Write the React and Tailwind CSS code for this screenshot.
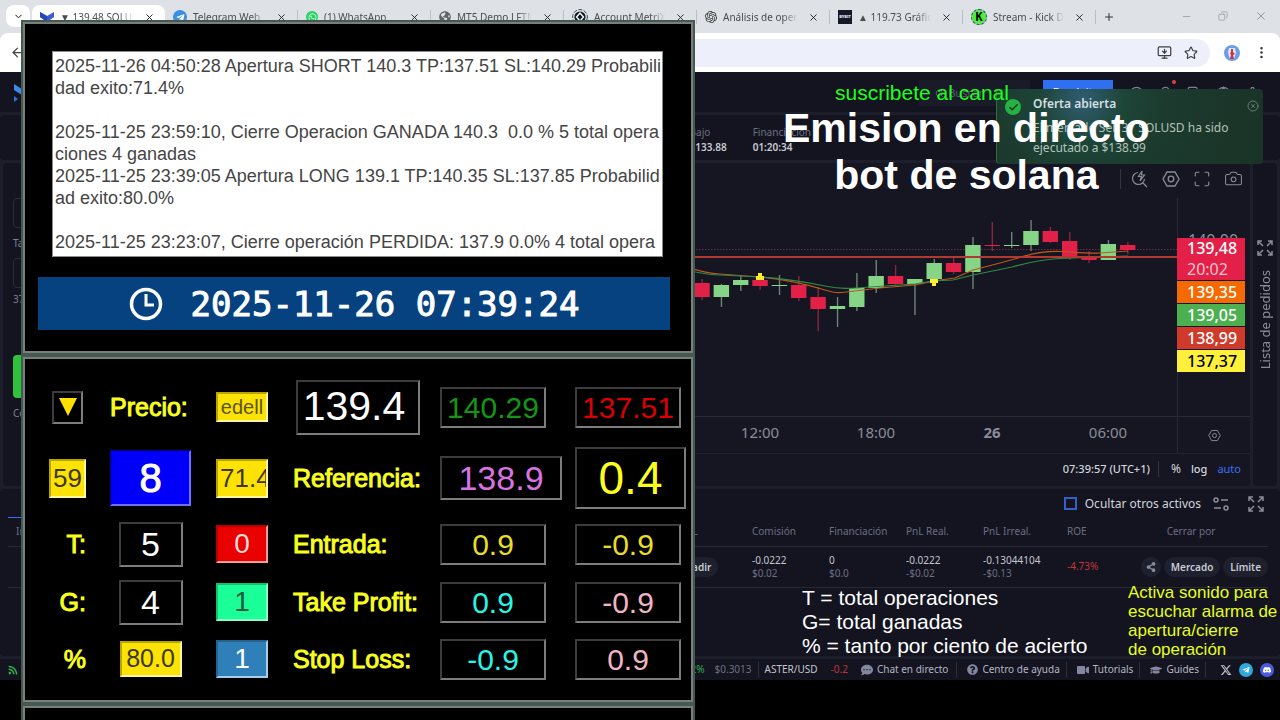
import {
  ArrowLeft,
  Bell,
  Camera,
  Check,
  ChevronDown,
  CircleHelp,
  CircleX,
  Copy,
  EllipsisVertical,
  Globe,
  Maximize,
  Minus,
  MonitorDown,
  Plus,
  Search,
  Settings,
  Star,
  X,
} from "lucide-react";
import {
  FaCommentDots,
  FaGlobeAmericas,
  FaGraduationCap,
  FaQuestionCircle,
  FaRss,
  FaShareAlt,
  FaTelegramPlane,
  FaVideo,
  FaWhatsapp,
} from "react-icons/fa";
import { FaXTwitter } from "react-icons/fa6";
import { SiDiscord, SiOpenai } from "react-icons/si";

// ---------------------------- data ----------------------------|

const tabs = [
  { title: "▼ 139.48 SOLUSD", icon: "phemex", active: true },
  { title: "Telegram Web", icon: "telegram" },
  { title: "(1) WhatsApp", icon: "whatsapp" },
  { title: "MT5 Demo LFTM", icon: "globe" },
  { title: "Account MetriX |", icon: "metrix" },
  { title: "Análisis de operaciones", icon: "openai" },
  { title: "▲ 119.73 Gráficos", icon: "bybit" },
  { title: "Stream - Kick Dash", icon: "kick" },
];

// [up, open/close top, bottom, wick top, wick bottom]
const candles = [
  [false, 283, 297, 279, 300],
  [true, 285, 297, 284, 307],
  [true, 280, 285, 276, 291],
  [false, 280, 286, 276, 290],
  [true, 285, 286, 275, 295],
  [false, 285, 298, 276, 301],
  [false, 297, 309, 287, 331],
  [true, 306, 309, 297, 327],
  [true, 288, 307, 273, 311],
  [true, 276, 288, 260, 293],
  [false, 276, 284, 265, 285],
  [true, 279, 284, 279, 315],
  [true, 263, 279, 259, 280],
  [false, 263, 272, 257, 274],
  [true, 245, 272, 237, 289],
  [false, 245, 246, 222, 251],
  [true, 245, 246, 232, 248],
  [true, 231, 245, 220, 251],
  [false, 231, 242, 227, 243],
  [false, 241, 257, 232, 260],
  [false, 256, 260, 251, 263],
  [true, 244, 260, 240, 260],
  [false, 245, 250, 242, 254],
];

const priceTags = [
  { value: "139,35", style: "bg-[#f56a00] text-white" },
  { value: "139,05", style: "bg-[#4caf50] text-white" },
  { value: "138,99", style: "bg-[#cf3a2b] text-white" },
  { value: "137,37", style: "bg-[#fff03c] text-black" },
];

const log = `2025-11-26 04:50:28 Apertura SHORT 140.3 TP:137.51 SL:140.29 Probabili
dad exito:71.4%

2025-11-25 23:59:10, Cierre Operacion GANADA 140.3  0.0 % 5 total opera
ciones 4 ganadas
2025-11-25 23:39:05 Apertura LONG 139.1 TP:140.35 SL:137.85 Probabilid
ad exito:80.0%

2025-11-25 23:23:07, Cierre operación PERDIDA: 137.9 0.0% 4 total opera`;

// ---------------------------- browser ----------------------------|

function PhemexMark({ className }) {
  return (
    <svg viewBox="0 0 14 10" className={className}>
      <path d="M0 0 7 4 14 0v5L7 10 0 5z" fill="#3b5bdb" />
      <path d="M0 0 7 4v6L0 5z" fill="#2746b8" />
    </svg>
  );
}

function Favicon({ icon }) {
  if (icon === "phemex") return <PhemexMark className="w-3.5 shrink-0" />;
  if (icon === "telegram")
    return (
      <span className="flex size-3.5 shrink-0 items-center justify-center rounded-full bg-[#3a8fe0] text-white">
        <FaTelegramPlane size={9} />
      </span>
    );
  if (icon === "whatsapp")
    return (
      <span className="flex size-3 shrink-0 items-center justify-center rounded-full bg-[#25d366] text-white">
        <FaWhatsapp size={9} />
      </span>
    );
  if (icon === "globe") return <FaGlobeAmericas size={12} className="shrink-0 text-[#5f6368]" />;
  if (icon === "openai") return <SiOpenai size={12} className="shrink-0 text-[#333]" />;
  if (icon === "bybit")
    return (
      <span className="flex h-3.5 w-3.5 shrink-0 items-center justify-center bg-[#15192a] text-[4px] font-bold text-white">
        BYBIT
      </span>
    );
  if (icon === "kick")
    return (
      <span className="flex size-4 shrink-0 items-center justify-center rounded-full border border-dashed border-[#1a4a6a] bg-[#3dfc1c] font-['DejaVu_Sans_Mono'] text-[12px] font-bold leading-none text-black ring-1 ring-[#9fb4bd] ring-inset">
        K
      </span>
    );
  return (
    <svg viewBox="0 0 16 16" className="size-4 shrink-0">
      <circle cx="8" cy="8" r="7.4" fill="none" stroke="#3b4a5c" strokeDasharray="4 1.5" />
      <circle cx="8" cy="8" r="5.6" fill="#111827" />
      <path d="M8 4 4.500 8 8 12 11.500 8z" fill="none" stroke="#fff" strokeWidth="1.4" />
    </svg>
  );
}

function Tab({ tab }) {
  return (
    <div
      className={`flex h-7 w-[133px] shrink-0 items-center pb-1 ${tab.active ? "rounded-t-lg bg-white" : ""}`}
    >
      <div className="flex min-w-0 flex-1 items-center gap-1.5 pl-2">
        <Favicon icon={tab.icon} />
        <span className="min-w-0 flex-1 overflow-hidden whitespace-nowrap text-[10px] text-[#4a4d52] [mask-image:linear-gradient(to_right,black_80%,transparent)]">
          {tab.title}
        </span>
      </div>
      <button aria-label="Cerrar pestaña" className="px-2.5">
        <X size={11} className="text-[#1f2023]" />
      </button>
      {!tab.active && <span className="h-3.5 w-px bg-[#b9bdc4]" />}
    </div>
  );
}

function BrowserBar() {
  return (
    <header className="bg-[#dee1e5]">
      <div className="flex items-end">
        <button
          aria-label="Buscar pestañas"
          className="mb-1.5 ml-1.5 mr-0.5 flex h-[22px] w-6 items-center justify-center rounded-lg bg-white"
        >
          <ChevronDown size={11} />
        </button>
        <div className="flex h-[33px] flex-1 items-end overflow-hidden">
          {tabs.map((tab) => (
            <Tab key={tab.title} tab={tab} />
          ))}
          <button aria-label="Nueva pestaña" className="mb-2.5 ml-[7px]">
            <Plus size={12} className="text-[#333]" />
          </button>
        </div>
        <div className="mb-2.5 flex items-center gap-[26px] pr-3 text-[#8b8e93]">
          <Minus size={11} strokeWidth={1.5} />
          <Copy size={10} strokeWidth={1.5} className="-scale-x-100" />
          <X size={14} strokeWidth={1.5} />
        </div>
      </div>
      <div className="flex h-[39px] items-center rounded-t-lg bg-white pl-2.5 pr-[11px]">
        <ArrowLeft size={15} className="text-[#444]" />
        <div className="ml-4 flex h-7 flex-1 items-center justify-end gap-3 rounded-full bg-[#edf0fa] pr-3 text-[#3c4043]">
          <MonitorDown size={15} />
          <Star size={14} />
        </div>
        <span className="ml-3.5 flex size-4 items-center justify-center rounded-full bg-[#6d9de8]">
          <svg viewBox="0 0 16 16" className="size-4">
            <path d="M5 3h6l1 5-2 6H6L4 8z" fill="#dfe6f5" />
            <path d="M7 4h2v3l2 2-2 1 1 4H6l1-4-1-2 1-1z" fill="#c8344a" />
          </svg>
        </span>
        <EllipsisVertical size={15} className="ml-3.5 text-[#333]" />
      </div>
    </header>
  );
}

// ---------------------------- exchange page ----------------------------|

function AppHeader() {
  return (
    <div className="flex h-10 items-start bg-[#131420] pt-2">
      <svg viewBox="0 0 14 20" className="ml-3.5 mt-1 h-5 w-3.5">
        <path d="M0 0 14 9v6L0 6z" fill="#3b8be8" />
        <path d="M0 12l4 3-4 3z" fill="#2f6fe0" />
      </svg>
      <label className="ml-auto mr-[13px] flex h-[26px] w-[111px] items-center gap-1 bg-[#1a1b28] px-4 text-[#6b6e80]">
        <Search size={11} />
        <input
          aria-label="Buscar"
          placeholder="Buscar"
          className="w-full bg-transparent text-[11px] outline-none placeholder:text-[#5a5d6e]"
        />
      </label>
      <button className="h-6 w-[70px] bg-[#2f6ff2] text-[11px] text-white">Depósitar</button>
      <div className="mr-5 ml-4 mt-1.5 flex gap-[14px] text-[#7d8090]">
        <CircleHelp size={15} />
        <span className="relative">
          <Bell size={15} />
          <span className="absolute -top-1.5 left-3.5 size-1 rounded-full bg-[#e0413f]" />
        </span>
        <Copy size={15} />
        <Globe size={15} />
        <Settings size={15} />
      </div>
    </div>
  );
}

function MarketStats() {
  return (
    <dl className="flex h-[45px] items-center justify-end gap-[26px] rounded bg-[#131420] pt-1 pr-[469px] text-[10px] leading-[15px]">
      <div>
        <dt className="text-[#6c6f80]">Bajo</dt>
        <dd className="font-semibold text-[#c9cbd4]">$133.88</dd>
      </div>
      <div>
        <dt className="text-[#6c6f80]">Financiación</dt>
        <dd className="font-semibold text-[#c9cbd4]">01:20:34</dd>
      </div>
    </dl>
  );
}

function OrderForm() {
  return (
    <aside className="flex w-[200px] flex-col rounded bg-[#131420] pl-2.5 pt-[35px] text-[10px] text-[#7d8090]">
      <div className="h-[30px] w-40 rounded border border-[#2b2d3b]" />
      <span className="py-2 leading-[14px]">Tamaño</span>
      <div className="h-[30px] w-40 rounded border border-[#2b2d3b]" />
      <span className="py-1 leading-[14px]">37</span>
      <button aria-label="Comprar" className="mt-[45px] h-[43px] w-40 rounded-sm bg-[#2ec23e]" />
      <span className="py-2 leading-[14px]">Coste</span>
    </aside>
  );
}

function HexIcon({ size }) {
  return (
    <svg width={size} height={size} viewBox="0 0 18 18" fill="none" stroke="currentColor" strokeWidth="1.3">
      <path d="M5 2h8l4 7-4 7H5L1 9z" />
      <circle cx="9" cy="9" r="2.8" />
    </svg>
  );
}

function Candles() {
  return (
    <svg viewBox="690 198 487 218" className="ml-auto h-[218px] w-[487px]">
      <path d="M690 249.5H1177" stroke="#6b2f43" strokeDasharray="1.5 1.5" />
      {candles.map(([up, top, bottom, high, low], i) => {
        const x = 702 + i * 19.35;
        return (
          <g key={i}>
            <rect x={x - 0.6} y={high} width="1.4" height={low - high} fill={up ? "#6d8478" : "#86263f"} />
            <rect x={x - 7.7} y={top} width="15.4" height={bottom - top} fill={up ? "#86d486" : "#e32148"} />
          </g>
        );
      })}
      <path
        d="M690 268C700 271 708 273 720 274L760 277C790 280 815 287 825 290S838 293 846 292L880 288 915 285 940 280 955 278 973 270 1000 263 1018 258C1030 254 1045 251 1060 251.5S1085 254 1100 253L1128 251"
        fill="none"
        stroke="#c2561c"
        strokeWidth="1.2"
      />
      <path
        d="M690 271C700 273 710 275 720 275L760 277C790 279 810 283 825 286S850 289 870 287L915 284 932 281 953 280 973 275 1012 267C1030 262 1045 259 1060 258.5L1128 256"
        fill="none"
        stroke="#2f8a45"
        strokeWidth="1.2"
      />
      <path d="M690 257H1177" stroke="#b03a32" strokeWidth="2" />
      <path d="M758 273h4v3h2v4h-8v-4h2z" fill="#ffee2e" />
      <path d="M930 279h8v4h-2v3h-4v-3h-2z" fill="#ffee2e" />
    </svg>
  );
}

function Chart() {
  return (
    <section className="flex min-w-0 flex-1 flex-col rounded bg-[#151621] text-[#8a8c99]">
      <div className="flex h-[35px] items-center justify-end gap-[13px] pr-[7px] pb-1">
        <span className="mr-[-3px] h-5 w-px bg-[#333545]" />
        <svg width="18" height="18" viewBox="0 0 18 18" fill="none" stroke="currentColor" strokeWidth="1.2">
          <path d="M7 2.5A6 6 0 1 0 13.5 9M12 13l4 4M11 1 7.5 6.5h3L9 11l4.5-6h-3z" />
        </svg>
        <HexIcon size={18} />
        <Maximize size={18} strokeWidth={1.5} />
        <Camera size={19} strokeWidth={1.3} />
      </div>
      <div className="flex flex-1">
        <div className="min-w-0 flex-1">
          <Candles />
        </div>
        <div className="w-[73px] border-l border-[#272936] pt-9 text-[16px]">
          <p className="h-1 overflow-hidden pl-2.5 leading-3">140,00</p>
          <div className="mr-[5px] -ml-px bg-[#e32148] pl-2.5 leading-[21px] text-white">
            <p className="font-medium">139,48</p>
            <p className="text-[#f8c3cd]">20:02</p>
          </div>
          {priceTags.map((tag) => (
            <p key={tag.value} className={`mt-px mr-[5px] -ml-px pl-2.5 font-medium leading-[22px] ${tag.style}`}>
              {tag.value}
            </p>
          ))}
        </div>
      </div>
      <div className="flex h-[37px] items-stretch border-t border-[#272936] text-[15px]">
        <div className="flex flex-1 items-center justify-end pr-[11px] pb-1.5 text-center">
          <span className="w-[116px]">12:00</span>
          <span className="w-[116px]">18:00</span>
          <span className="w-[116px] font-bold">26</span>
          <span className="w-[116px]">06:00</span>
        </div>
        <div className="flex w-[73px] items-center justify-center border-l border-[#272936]">
          <HexIcon size={13} />
        </div>
      </div>
      <div className="flex h-[33px] items-center justify-end gap-2.5 border-t border-[#1f212d] pr-[9px] pb-0.5 text-[11px] text-[#d2d4dc]">
        <span className="font-medium">07:39:57 (UTC+1)</span>
        <span className="mx-[-2px] h-4 w-px bg-[#333545]" />
        <button className="ml-1 text-[12px]">%</button>
        <button className="font-medium">log</button>
        <button className="text-[#3d6ef5]">auto</button>
      </div>
    </section>
  );
}

function ExpandIcon() {
  return (
    <svg viewBox="0 0 16 16" className="size-4" fill="none" stroke="currentColor" strokeWidth="1.5">
      <path d="M1 5V1h4M1 1l5 5M11 1h4v4M15 1l-5 5M15 11v4h-4M15 15l-5-5M5 15H1v-4M1 15l5-5" />
    </svg>
  );
}

function OrderBookRail() {
  return (
    <aside className="flex w-6 flex-col items-center gap-3.5 rounded bg-[#131420] pt-[77px] text-[#8a8c99]">
      <ExpandIcon />
      <button className="rotate-180 text-[13px] leading-4 whitespace-nowrap [writing-mode:vertical-rl]">
        Lista de pedidos
      </button>
    </aside>
  );
}

function Positions() {
  const pill = "shrink-0 rounded-full bg-[#1e202e] px-[7px] text-[10px] font-semibold leading-5 text-[#c9cbd4]";
  return (
    <section className="h-[167px] rounded bg-[#131420] pl-2 pr-3">
      <div className="flex h-[29px] items-center gap-3">
        <span className="w-40 self-stretch border-b border-[#3d6ef5]" />
        <label className="ml-auto flex items-center gap-2 text-[12px] text-[#d2d4dc]">
          <input
            type="checkbox"
            className="size-[13px] appearance-none border-2 border-[#3460c8] bg-transparent"
          />
          Ocultar otros activos
        </label>
        <svg viewBox="0 0 16 14" className="h-3.5 w-4 text-[#8a8c99]" fill="none" stroke="currentColor" strokeWidth="1.5">
          <circle cx="3" cy="3" r="2" />
          <path d="M8 3h7M1 11h7" />
          <circle cx="13" cy="11" r="2" />
        </svg>
        <span className="ml-[7px] mr-1 text-[#8a8c99]">
          <ExpandIcon />
        </span>
      </div>
      <table className="w-full table-fixed text-left text-[10px] leading-[13px] text-[#c3c5cf]">
        <colgroup>
          <col />
          <col className="w-[80px]" />
          <col className="w-[77px]" />
          <col className="w-[77px]" />
          <col className="w-[77px]" />
          <col className="w-[84px]" />
          <col className="w-[71px]" />
          <col className="w-[130px]" />
        </colgroup>
        <thead className="border-b border-[#262836] text-[#6c6f80]">
          <tr className="h-7">
            <th className="pl-2 font-normal">Instrumento</th>
            <th className="font-normal">TP/SL</th>
            <th className="font-normal">Comisión</th>
            <th className="font-normal">Financiación</th>
            <th className="font-normal">PnL Real.</th>
            <th className="font-normal">PnL Irreal.</th>
            <th className="font-normal">ROE</th>
            <th className="pr-6 text-center font-normal">Cerrar por</th>
          </tr>
        </thead>
        <tbody>
          <tr className="h-[41px] border-b border-[#262836]">
            <td />
            <td>
              <button className={pill}>Añadir</button>
            </td>
            <td>
              -0.0222
              <p className="text-[#6c6f80]">$0.02</p>
            </td>
            <td>
              0<p className="text-[#6c6f80]">$0.0</p>
            </td>
            <td>
              -0.0222
              <p className="text-[#6c6f80]">-$0.02</p>
            </td>
            <td>
              -0.13044104
              <p className="text-[#6c6f80]">-$0.13</p>
            </td>
            <td className="text-[#c0343a]">-4.73%</td>
            <td>
              <div className="flex items-center justify-end gap-[3px]">
                <button
                  aria-label="Compartir"
                  className="flex size-5 shrink-0 items-center justify-center rounded-full bg-[#1e202e] text-[#8a8c99]"
                >
                  <FaShareAlt size={10} />
                </button>
                <button className={pill}>Mercado</button>
                <button className={pill}>Límite</button>
              </div>
            </td>
          </tr>
        </tbody>
      </table>
    </section>
  );
}

function StatusBar() {
  const sep = <span className="h-4 w-px bg-[#2b2d3b]" />;
  const link = "flex items-center gap-1 text-[#b4b6c2]";
  return (
    <footer className="flex h-[21px] items-center gap-1.5 overflow-hidden bg-[#131420] pl-2 pr-1.5 text-[10px] whitespace-nowrap text-[#c3c5cf]">
      <FaRss size={10} className="text-[#2fae4a]" />
      <span className="ml-auto text-[#2fae4a]">+0.2%</span>
      <span className="ml-1 text-[#6c6f80]">$0.3013</span>
      {sep}
      <span>ASTER/USD</span>
      <span className="mx-[7px] text-[#c0343a]">-0.2</span>
      <a href="#chat" className={`${link} pr-0.5`}>
        <FaCommentDots size={12} className="text-[#8387a0]" /> Chat en directo
      </a>
      {sep}
      <a href="#ayuda" className={`${link} pl-1`}>
        <FaQuestionCircle size={11} className="text-[#8387a0]" /> Centro de ayuda
      </a>
      {sep}
      <a href="#tutorials" className={`${link} pl-1`}>
        <FaVideo size={12} className="text-[#8387a0]" /> Tutorials
      </a>
      {sep}
      <a href="#guides" className={`${link} pl-1`}>
        <FaGraduationCap size={12} className="text-[#8387a0]" /> Guides
      </a>
      {sep}
      <div className="ml-2 flex items-center gap-[7px]">
        <FaXTwitter size={12} />
        <span className="flex size-[14px] items-center justify-center rounded-full bg-[#2fa8dc] text-white">
          <FaTelegramPlane size={8} />
        </span>
        <span className="flex size-[14px] items-center justify-center rounded-full bg-[#4a5be0] text-white">
          <SiDiscord size={8} />
        </span>
      </div>
    </footer>
  );
}

function Toast() {
  return (
    <div
      role="status"
      className="absolute top-[89px] right-[17px] flex h-[75px] w-[267px] gap-3 rounded border-l border-[#2c6b45] bg-[radial-gradient(circle_at_32%_15%,#315c72_0%,#1d4538_22%,#1c3a2e_45%,#1a3326_100%)] pt-1.5 pl-2 pr-1"
    >
      <span className="mt-1 flex size-4 shrink-0 items-center justify-center rounded-full bg-[#27b244]">
        <Check size={11} className="text-[#123a20]" strokeWidth={3} />
      </span>
      <div className="min-w-0 flex-1 text-[12px] leading-5 text-[#b3c2ba]">
        <p className="-mt-px mb-1 font-semibold text-[#d3dfe0]">Oferta abierta</p>
        <p>
          El mercado Sell 37 SOLUSD ha sido
          <br />
          ejecutado a $138.99
        </p>
      </div>
      <button aria-label="Cerrar aviso" className="mt-[5px] self-start">
        <CircleX size={12} className="text-[#7d9488]" strokeWidth={1.5} />
      </button>
    </div>
  );
}

// ---------------------------- bot window ----------------------------|

function Frame({ children }) {
  return (
    <div className="border-2 border-[#435a51]">
      <div className="border-2 border-[#7c7e7b] bg-black">{children}</div>
    </div>
  );
}

function Box({ value, label, className, edge = "border-t-[#3c3c3c] border-l-[#3c3c3c] border-r-[#7d7d7d] border-b-[#7d7d7d]" }) {
  return (
    <input
      readOnly
      aria-label={label}
      value={value}
      className={`block border-2 p-0 text-center outline-none ${edge} ${className}`}
    />
  );
}

const gold = "border-t-[#b9a500] border-l-[#b9a500] border-r-[#fff6a0] border-b-[#fff6a0]";
const label = "text-[25px] leading-none text-[#f8ff1e] [-webkit-text-stroke:1px_#f8ff1e]";

function BotWindow() {
  return (
    <main className="absolute top-5 left-[21px] w-[674px] font-['Liberation_Sans',sans-serif]">
      <Frame>
        <div className="px-[13px] pt-[27px] pb-[21px]">
          <textarea
            readOnly
            aria-label="Registro de operaciones"
            value={log}
            className="mr-2 ml-3.5 block h-[206px] w-[611px] resize-none overflow-hidden border border-[#8c8c8c] bg-white px-0.5 pt-[3px] text-[18px] leading-[22px] whitespace-pre text-[#454545] outline-none"
          />
          <div className="mt-5 flex h-[53px] w-[632px] items-center justify-center gap-7 bg-[#064280] text-white">
            <svg viewBox="0 0 34 34" className="size-[34px]" fill="none" stroke="currentColor" strokeWidth="3.5">
              <circle cx="17" cy="17" r="14.5" />
              <path d="M17 7v11h8" strokeWidth="3" />
            </svg>
            <time className="font-['DejaVu_Sans_Mono',monospace] text-[34px] leading-none [-webkit-text-stroke:1px_white]">
              2025-11-26 07:39:24
            </time>
          </div>
        </div>
      </Frame>
      <Frame>
        <div className="grid grid-cols-[61px_81px_78px_135px_123px_111px] grid-rows-[72px_70px_62px_54px_60px] items-center gap-x-3 pt-3 pb-[11px] pl-3">
          <button
            aria-label="Bajar"
            className="flex h-[33px] w-[31px] items-center justify-center justify-self-center border-2 border-t-[#3c3c3c] border-l-[#3c3c3c] border-r-[#7d7d7d] border-b-[#7d7d7d]"
          >
            <svg viewBox="0 0 18 18" className="size-[18px]">
              <path d="M0 0h18L9 18z" fill="#ffe000" />
            </svg>
          </button>
          <span className={label}>Precio:</span>
          <Box label="Modo" value="edell" edge={gold} className="h-[30px] w-[52px] justify-self-center bg-[#fce205] text-[20px] text-[#5d5410]" />
          <Box label="Precio" value="139.4" className="ml-[3px] h-[55px] w-[124px] pr-2 text-[41px] text-white" />
          <Box label="Stop" value="140.29" className="h-[41px] w-[106px] text-[30px] text-[#149614]" />
          <Box label="Objetivo" value="137.51" className="h-[41px] w-[106px] text-[30px] text-[#dc0000]" />

          <Box label="Segundos" value="59" edge={gold} className="h-[39px] w-[37px] justify-self-center bg-[#fce205] text-[26px] text-[#3e3808]" />
          <Box label="Contador" value="8" edge="border-t-[#0000b4] border-l-[#0000b4] border-r-[#6f6fff] border-b-[#6f6fff]" className="h-14 w-[81px] bg-[#0000fa] text-[40px] text-white [-webkit-text-stroke:1px_white]" />
          <Box label="Probabilidad" value="71.4" edge={gold} className="h-[39px] w-[52px] justify-self-center bg-[#fce205] pl-0.5 text-left! text-[26px] text-[#3e3808]" />
          <span className={label}>Referencia:</span>
          <Box label="Referencia" value="138.9" className="h-11 w-[122px] text-[34px] text-[#d873e0]" />
          <Box label="Diferencia" value="0.4" className="h-[62px] w-[111px] text-[46px] text-[#fcff1e]" />

          <span className={`${label} justify-self-end pr-3`}>T:</span>
          <Box label="Total operaciones" value="5" className="h-[45px] w-16 justify-self-center text-[34px] text-white" />
          <Box label="Perdidas" value="0" edge="border-t-[#b40000] border-l-[#b40000] border-r-[#ff9c9c] border-b-[#ff9c9c]" className="h-[38px] w-[52px] justify-self-center bg-[#eb0000] text-[28px] text-[#f2dada]" />
          <span className={label}>Entrada:</span>
          <Box label="Entrada larga" value="0.9" className="h-[41px] w-[106px] text-[30px] text-[#e8dc28]" />
          <Box label="Entrada corta" value="-0.9" className="h-[41px] w-[106px] text-[30px] text-[#e8dc28]" />

          <span className={`${label} justify-self-end pr-3`}>G:</span>
          <Box label="Total ganadas" value="4" className="h-[45px] w-16 justify-self-center text-[34px] text-white" />
          <Box label="Largos" value="1" edge="border-t-[#12c070] border-l-[#12c070] border-r-[#8affc8] border-b-[#8affc8]" className="h-[38px] w-[52px] justify-self-center bg-[#1aff97] text-[28px] text-[#1f5a3c]" />
          <span className={label}>Take Profit:</span>
          <Box label="Take profit largo" value="0.9" className="h-[41px] w-[106px] text-[30px] text-[#28f5e6]" />
          <Box label="Take profit corto" value="-0.9" className="h-[41px] w-[106px] text-[30px] text-[#f0b4c3]" />

          <span className={`${label} justify-self-end pr-3`}>%</span>
          <Box label="Acierto" value="80.0" edge={gold} className="h-[36px] w-[62px] justify-self-center bg-[#fce205] text-[25px] text-[#3e3808]" />
          <Box label="Cortos" value="1" edge="border-t-[#24628f] border-l-[#24628f] border-r-[#a8cdea] border-b-[#a8cdea]" className="h-[38px] w-[52px] justify-self-center bg-[#2f7fb8] text-[28px] text-white" />
          <span className={label}>Stop Loss:</span>
          <Box label="Stop loss largo" value="-0.9" className="h-[41px] w-[106px] text-[30px] text-[#28f5e6]" />
          <Box label="Stop loss corto" value="0.9" className="h-[41px] w-[106px] text-[30px] text-[#f0b4c3]" />
        </div>
      </Frame>
      <Frame>
        <div className="h-10" />
      </Frame>
    </main>
  );
}

// ---------------------------- scene ----------------------------|

export default function App() {
  return (
    <div className="relative flex h-screen flex-col overflow-hidden bg-black pb-10 font-['Noto_Sans',sans-serif]">
      <BrowserBar />
      <div className="flex flex-1 flex-col gap-[3px] bg-[#1c1e2b]">
        <AppHeader />
        <MarketStats />
        <div className="flex flex-1 gap-[3px] px-[3px]">
          <OrderForm />
          <Chart />
          <OrderBookRail />
        </div>
        <Positions />
        <StatusBar />
      </div>

      <Toast />
      <BotWindow />

      <div className="absolute top-[81px] left-[783px] font-['Liberation_Sans',sans-serif] text-white">
        <p className="ml-[52px] text-[21px] leading-6 text-[#1dff1d]">suscribete al canal</p>
        <h1 className="text-center text-[41px] leading-[47px] font-bold">
          Emision en directo
          <br />
          bot de solana
        </h1>
      </div>
      <p className="absolute top-[586px] left-[802px] font-['Liberation_Sans',sans-serif] text-[21px] leading-[24px] text-white">
        T = total operaciones
        <br />
        G= total ganadas
        <br />% = tanto por ciento de acierto
      </p>
      <p className="absolute top-[583px] left-[1128px] font-['Liberation_Sans',sans-serif] text-[17px] leading-[19px] whitespace-nowrap text-[#e6ff1e]">
        Activa sonido para
        <br />
        escuchar alarma de
        <br />
        apertura/cierre
        <br />
        de operación
      </p>
    </div>
  );
}
